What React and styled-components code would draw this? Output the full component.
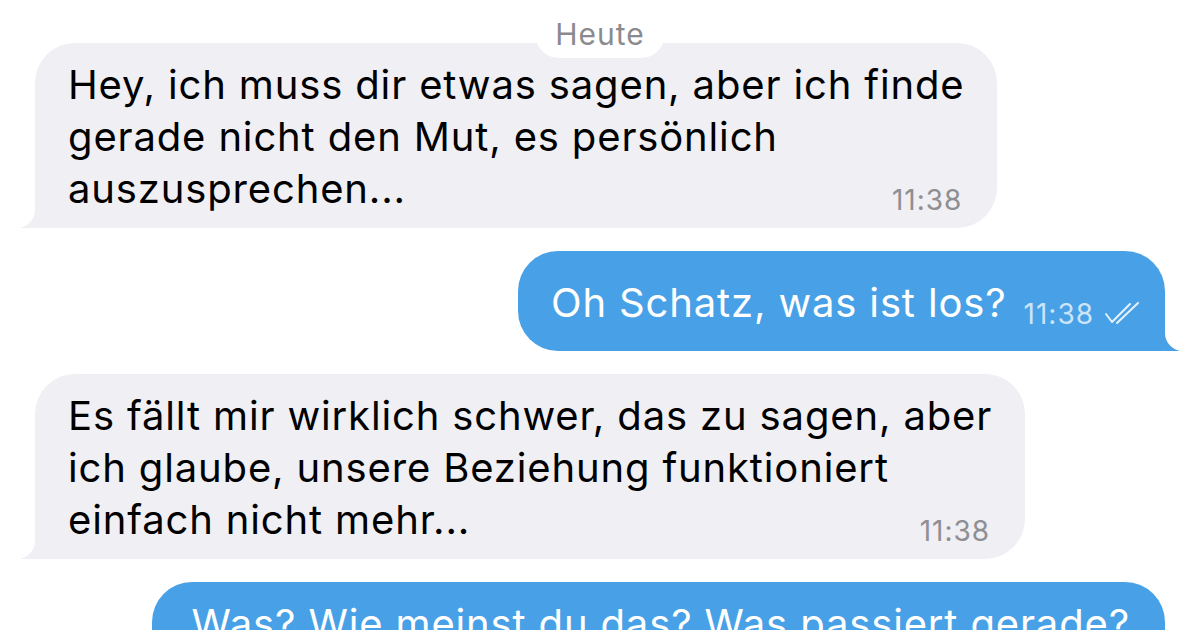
import React from 'react';
import styled, { createGlobalStyle, css } from 'styled-components';

const GlobalStyle = createGlobalStyle`
  html, body {
    margin: 0;
    padding: 0;
    background: #ffffff;
    overflow: hidden;
  }
  body {
    font-family: Inter, "Liberation Sans", Arial, sans-serif;
    -webkit-font-smoothing: antialiased;
  }
`;

const GRAY = '#efeff4';
const BLUE = '#48a1e6';

const Page = styled.div`
  width: 1200px;
  height: 630px;
  box-sizing: border-box;
  padding: 0 35px;
  display: flex;
  flex-direction: column;
  gap: 23px;
  overflow: hidden;
`;

const DayRow = styled.div`
  display: flex;
  justify-content: center;
  margin-bottom: -38px;
  position: relative;
  z-index: 2;
`;

const DayPill = styled.div`
  background: #ffffff;
  color: #8a8a8f;
  font-size: 30px;
  letter-spacing: 1px;
  line-height: 34px;
  padding: 17px 20px 7px;
  border-radius: 0 0 24px 24px;
`;

const Row = styled.div`
  display: flex;
  justify-content: ${(p) => (p.$out ? 'flex-end' : 'flex-start')};
`;

const tailIn = css`
  border-bottom-left-radius: 4px;
  &::before {
    content: '';
    position: absolute;
    bottom: 0;
    left: -14px;
    width: 40px;
    height: 32px;
    background: ${GRAY};
    border-bottom-right-radius: 26px 22px;
  }
  &::after {
    content: '';
    position: absolute;
    bottom: 0;
    left: -34px;
    width: 34px;
    height: 33px;
    background: #ffffff;
    border-bottom-right-radius: 18px;
  }
`;

const tailOut = css`
  border-bottom-right-radius: 4px;
  &::before {
    content: '';
    position: absolute;
    bottom: 0;
    right: -14px;
    width: 40px;
    height: 32px;
    background: ${BLUE};
    border-bottom-left-radius: 26px 22px;
  }
  &::after {
    content: '';
    position: absolute;
    bottom: 0;
    right: -34px;
    width: 34px;
    height: 33px;
    background: #ffffff;
    border-bottom-left-radius: 18px;
  }
`;

const Bubble = styled.div`
  position: relative;
  display: flex;
  flex-direction: column;
  box-sizing: border-box;
  max-width: 1050px;
  padding: ${(p) => p.$pad || '16px 33px 13px 33px'};
  border-radius: 40px;
  background: ${(p) => (p.$out ? BLUE : GRAY)};
  color: ${(p) => (p.$out ? '#ffffff' : '#000000')};
  ${(p) => (p.$out ? tailOut : tailIn)}
`;

const Text = styled.div`
  position: relative;
  z-index: 1;
  font-size: 40px;
  letter-spacing: 0.85px;
  line-height: 52px;
  white-space: nowrap;
`;

const Line = styled.div``;

const InlineRow = styled.div`
  position: relative;
  z-index: 1;
  display: flex;
  align-items: flex-end;
  gap: 17px;
`;

const Meta = styled.div`
  position: relative;
  z-index: 1;
  align-self: flex-end;
  display: flex;
  align-items: center;
  gap: 10px;
  font-size: 28px;
  letter-spacing: 1px;
  line-height: 30px;
  color: ${(p) => (p.$out ? 'rgba(255,255,255,0.72)' : '#8e8e93')};
  margin-top: ${(p) => (p.$stacked ? '-30px' : '0')};
  margin-right: ${(p) => (p.$stacked ? '2px' : '0')};
`;

const Checks = () => (
  <svg width="36" height="24" viewBox="0 0 36 24" fill="none">
    <path
      d="M2 12 L8 20 L26 2"
      stroke="rgba(255,255,255,0.85)"
      strokeWidth="2"
      strokeLinecap="round"
      strokeLinejoin="round"
    />
    <path
      d="M13 21 L34 1"
      stroke="rgba(255,255,255,0.85)"
      strokeWidth="2"
      strokeLinecap="round"
    />
  </svg>
);

const Incoming = ({ lines, time }) => (
  <Row>
    <Bubble>
      <Text>
        {lines.map((l) => (
          <Line key={l}>{l}</Line>
        ))}
      </Text>
      <Meta $stacked>{time}</Meta>
    </Bubble>
  </Row>
);

const App = () => (
  <>
    <GlobalStyle />
    <Page>
      <DayRow>
        <DayPill>Heute</DayPill>
      </DayRow>

      <Incoming
        lines={[
          'Hey, ich muss dir etwas sagen, aber ich finde',
          'gerade nicht den Mut, es persönlich',
          'auszusprechen...',
        ]}
        time="11:38"
      />

      <Row $out>
        <Bubble $out $pad="26px 25px 22px 33px">
          <InlineRow>
            <Text>Oh Schatz, was ist los?</Text>
            <Meta $out>
              11:38
              <Checks />
            </Meta>
          </InlineRow>
        </Bubble>
      </Row>

      <Incoming
        lines={[
          'Es fällt mir wirklich schwer, das zu sagen, aber',
          'ich glaube, unsere Beziehung funktioniert',
          'einfach nicht mehr...',
        ]}
        time="11:38"
      />

      <Row $out>
        <Bubble $out $pad="16px 35px 13px 40px">
          <Text>
            <Line>Was? Wie meinst du das? Was passiert gerade?</Line>
            <Line>&nbsp;</Line>
          </Text>
          <Meta $out $stacked>
            11:38
            <Checks />
          </Meta>
        </Bubble>
      </Row>
    </Page>
  </>
);

export default App;
